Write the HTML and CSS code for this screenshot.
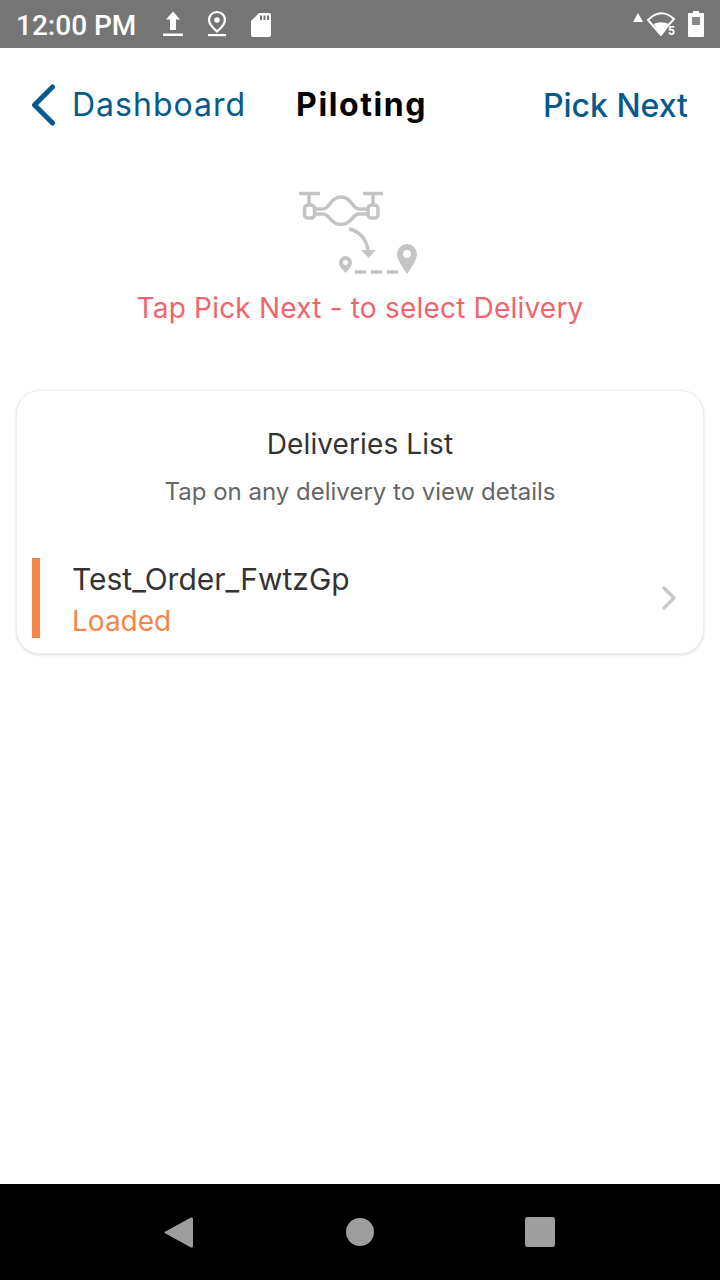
FILE: index.html
```html
<!DOCTYPE html>
<html lang="en">
<head>
<meta charset="utf-8">
<title>Piloting</title>
<link rel="stylesheet" href="styles.css">
</head>
<body>
<div class="screen">
  <div class="status">
    <span class="time">12:00 PM</span>
    <svg class="ic-upload" width="20" height="28" viewBox="0 0 20 28"><path d="M10 1.500 17 9.500H13V20H7V9.500H3Z" fill="#fff"/><rect x="0" y="23.500" width="20" height="2.500" fill="#fff"/></svg>
    <svg class="ic-loc" width="18" height="28" viewBox="0 0 18 28"><path d="M9 2a8 8 0 0 1 8 8c0 4.500-4.500 8.500-8 11.500C5.500 18.500 1 14.500 1 10a8 8 0 0 1 8-8Z" fill="none" stroke="#fff" stroke-width="2.200"/><circle cx="9" cy="10" r="2.800" fill="#fff"/><rect x="0" y="24" width="18" height="2.200" fill="#fff"/></svg>
    <svg class="ic-sd" width="20" height="24" viewBox="0 0 20 24"><path fill-rule="evenodd" d="M8 0H18a2 2 0 0 1 2 2V22a2 2 0 0 1-2 2H2a2 2 0 0 1-2-2V8ZM9 2.500V7H11V2.500ZM12.500 2.500V7H14.500V2.500ZM16 2.500V7H18V2.500Z" fill="#fff"/></svg>
    <span class="spacer"></span>
    <svg class="ic-tri" width="10" height="9" viewBox="0 0 10 9"><path d="M5 0 10 9H0Z" fill="#fff"/></svg>
    <svg class="ic-wifi" width="30" height="24" viewBox="647 11 30 24"><path d="M648 19Q661 6 674 18L669 23.500 661 34Z" fill="none" stroke="#fff" stroke-width="2" stroke-linejoin="round"/><path d="M653.500 23Q661 19.500 669 23L661 34Z" fill="#fff"/><text x="668" y="33.500" class="wifi-5">5</text></svg>
    <svg class="ic-batt" width="16" height="26" viewBox="0 0 16 26"><path fill-rule="evenodd" d="M5 0H11V2H15a1 1 0 0 1 1 1V25a1 1 0 0 1-1 1H1a1 1 0 0 1-1-1V3a1 1 0 0 1 1-1H5ZM4 6V14H12V6Z" fill="#fff"/><rect x="4" y="6" width="8" height="8" fill="#fff" opacity=".15"/></svg>
  </div>

  <main class="content">
    <header class="nav">
      <div class="back">
        <svg width="26" height="42" viewBox="0 0 26 42"><path d="M22.500 3 4.500 21 22.500 39" fill="none" stroke="#055a8c" stroke-width="5" stroke-linecap="round" stroke-linejoin="round"/></svg>
        <span>Dashboard</span>
      </div>
      <h1 class="title">Piloting</h1>
      <span class="pick">Pick Next</span>
    </header>

    <section class="hint">
      <svg class="drone" width="124" height="86" viewBox="298 190 124 86">
        <g fill="none" stroke="#c4c4c4" stroke-width="3.500">
          <path d="M299 193.500H320M309 193.500V205M363 193.500H383M373 193.500V205"/>
          <rect x="304.500" y="205" width="10" height="13" rx="3.500"/>
          <rect x="368" y="205" width="10" height="13" rx="3.500"/>
          <path d="M315 209H323C330 209 330 197 341 197C352 197 352 209 359 209H367"/>
          <path d="M315 214H323C330 214 330 224.500 341 224.500C352 224.500 352 214 359 214H367"/>
          <path d="M349 229C359 231 367 239 368 251"/>
          <path d="M355 272H366M371 272H382M387 272H398"/>
        </g>
        <path d="M361 250H376L368.500 258Z" fill="#c4c4c4"/>
        <path fill-rule="evenodd" d="M345.500 256a6.500 6.500 0 0 1 6.500 6.500c0 3.500-3.500 7.500-6.500 10.500-3-3-6.500-7-6.500-10.500a6.500 6.500 0 0 1 6.500-6.500Zm0 4a2.500 2.500 0 1 0 0 5 2.500 2.500 0 0 0 0-5Z" fill="#c4c4c4"/>
        <path fill-rule="evenodd" d="M407 244a10 10 0 0 1 10 10c0 6-6 14-10 20-4-6-10-14-10-20a10 10 0 0 1 10-10Zm0 6a4 4 0 1 0 0 8 4 4 0 0 0 0-8Z" fill="#c4c4c4"/>
      </svg>
      <p class="hint-text">Tap Pick Next - to select Delivery</p>
    </section>

    <section class="card">
      <h2 class="card-title">Deliveries List</h2>
      <p class="card-sub">Tap on any delivery to view details</p>
      <div class="row">
        <span class="bar"></span>
        <div class="row-text">
          <div class="row-name">Test_Order_FwtzGp</div>
          <div class="row-status">Loaded</div>
        </div>
        <svg class="chev" width="16" height="24" viewBox="0 0 16 24"><path d="M3 2 13 12 3 22" fill="none" stroke="#c8c8c8" stroke-width="3.200" stroke-linecap="round" stroke-linejoin="round"/></svg>
      </div>
    </section>
  </main>

  <nav class="sysnav">
    <svg width="32" height="33" viewBox="-1 0 32 33"><path d="M27 1.500a1.500 1.500 0 0 1 2 1.500V30a1.500 1.500 0 0 1-2 1.500L1.500 17.500a1 1 0 0 1 0-2Z" fill="#9e9e9e"/></svg>
    <svg width="28" height="28" viewBox="0 0 28 28"><circle cx="14" cy="14" r="14" fill="#9e9e9e"/></svg>
    <svg width="30" height="30" viewBox="0 0 30 30"><rect width="30" height="30" rx="3" fill="#9e9e9e"/></svg>
  </nav>
</div>
</body>
</html>
```

FILE: styles.css
```css
* { box-sizing: border-box; }
html, body { margin: 0; padding: 0; }
body { background: #fff; font-family: Inter, "Liberation Sans", sans-serif; }
.screen { width: 720px; height: 1280px; display: flex; flex-direction: column; overflow: hidden; }

.status { height: 48px; flex: none; background: #757575; display: flex; align-items: center; padding: 0 16px 0 16px; color: #fff; }
.time { font: 500 28px/36px Roboto, sans-serif; width: 147px; margin-top: 3px; }
.ic-upload { margin-right: 25px; }
.ic-loc { margin-right: 25px; }
.ic-sd { margin-top: 1px; }
.spacer { flex: 1; }
.ic-tri { margin-right: 4px; margin-bottom: 14px; }
.ic-wifi { margin-right: 11px; }
.wifi-5 { font: 700 12px Roboto, sans-serif; fill: #fff; }

.content { flex: 1; display: flex; flex-direction: column; }
.nav { height: 116px; padding: 0 32px 3px 30px; display: flex; align-items: center; flex: none; }
.back { display: flex; align-items: center; gap: 16px; color: #055a8c; font-size: 32px; letter-spacing: 1px; }
.title { margin: 0 0 0 50px; font-size: 32px; font-weight: 700; color: #000; line-height: 1; letter-spacing: 1.6px; }
.pick { margin-left: auto; color: #055a8c; font-size: 32px; font-weight: 500; position: relative; top: 1px; }

.hint { display: flex; flex-direction: column; align-items: center; padding-top: 26px; }
.drone { display: block; }
.hint-text { margin: 12px 0 0; font-size: 28px; line-height: 40px; color: #f1646c; letter-spacing: .2px; }

.card { margin: 62px 16px 0; height: 264px; background: #fff; border-radius: 24px; border: 1px solid #eee; box-shadow: 0 1px 3px rgba(0,0,0,.14); padding-top: 36px; display: flex; flex-direction: column; }
.card-title { margin: 0; font-size: 28px; line-height: 35px; font-weight: 400; color: #333; text-align: center; letter-spacing: .1px; }
.card-sub { margin: 12px 0 0; font-size: 24px; line-height: 36px; color: #666; text-align: center; }
.row { margin-top: 48px; display: flex; align-items: center; height: 80px; padding: 0 26px 0 15px; }
.bar { width: 8px; height: 80px; background: #f5854b; flex: none; }
.row-text { margin-left: 32px; flex: 1; padding-top: 4px; }
.row-name { font-size: 30px; line-height: 40px; color: #333; }
.row-status { font-size: 28px; line-height: 40px; color: #f5854b; margin-top: 2px; }

.sysnav { height: 96px; flex: none; background: #000; display: flex; align-items: center; justify-content: space-between; padding: 0 165px 0 163px; }
```
